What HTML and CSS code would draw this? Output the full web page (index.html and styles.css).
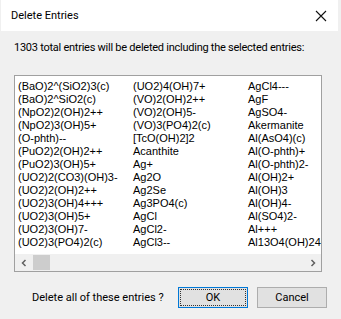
FILE: index.html
```html
<!DOCTYPE html>
<html lang="en">
<head>
    <meta charset="UTF-8">
    <title>Delete Entries</title>
    <link rel="stylesheet" href="styles.css">
</head>
<body>

    <div class="dialog">
        <div class="titlebar">
            <span class="title">Delete Entries</span>
            <svg class="close" width="12" height="12" viewBox="0 0 12 12">
                <path d="M1 1 L11 11 M11 1 L1 11" stroke="#111" stroke-width="1.1" fill="none"/>
            </svg>
        </div>

        <div class="content">
            <p class="message">1303 total entries will be deleted including the selected entries:</p>

            <div class="listbox">
                <div class="list-items">
                    <span>(BaO)2^(SiO2)3(c)</span>
                    <span>(BaO)2^SiO2(c)</span>
                    <span>(NpO2)2(OH)2++</span>
                    <span>(NpO2)3(OH)5+</span>
                    <span>(O-phth)--</span>
                    <span>(PuO2)2(OH)2++</span>
                    <span>(PuO2)3(OH)5+</span>
                    <span>(UO2)2(CO3)(OH)3-</span>
                    <span>(UO2)2(OH)2++</span>
                    <span>(UO2)3(OH)4+++</span>
                    <span>(UO2)3(OH)5+</span>
                    <span>(UO2)3(OH)7-</span>
                    <span>(UO2)3(PO4)2(c)</span>

                    <span>(UO2)4(OH)7+</span>
                    <span>(VO)2(OH)2++</span>
                    <span>(VO)2(OH)5-</span>
                    <span>(VO)3(PO4)2(c)</span>
                    <span>[TcO(OH)2]2</span>
                    <span>Acanthite</span>
                    <span>Ag+</span>
                    <span>Ag2O</span>
                    <span>Ag2Se</span>
                    <span>Ag3PO4(c)</span>
                    <span>AgCl</span>
                    <span>AgCl2-</span>
                    <span>AgCl3--</span>

                    <span>AgCl4---</span>
                    <span>AgF</span>
                    <span>AgSO4-</span>
                    <span>Akermanite</span>
                    <span>Al(AsO4)(c)</span>
                    <span>Al(O-phth)+</span>
                    <span>Al(O-phth)2-</span>
                    <span>Al(OH)2+</span>
                    <span>Al(OH)3</span>
                    <span>Al(OH)4-</span>
                    <span>Al(SO4)2-</span>
                    <span>Al+++</span>
                    <span>Al13O4(OH)24(c)</span>
                </div>

                <div class="hscroll">
                    <span class="scroll-btn">
                        <svg width="8" height="8" viewBox="0 0 8 8">
                            <path d="M5.5 1 L2.5 4 L5.5 7" stroke="#606060" stroke-width="1.5" fill="none"/>
                        </svg>
                    </span>
                    <span class="scroll-track">
                        <span class="scroll-thumb"></span>
                    </span>
                    <span class="scroll-btn">
                        <svg width="8" height="8" viewBox="0 0 8 8">
                            <path d="M2.5 1 L5.5 4 L2.5 7" stroke="#606060" stroke-width="1.5" fill="none"/>
                        </svg>
                    </span>
                </div>
            </div>

            <div class="footer">
                <span class="question">Delete all of these entries ?</span>
                <div class="buttons">
                    <button class="btn btn-default">OK</button>
                    <button class="btn">Cancel</button>
                </div>
            </div>
        </div>
    </div>

</body>
</html>
```

FILE: styles.css
```css
* {
    margin: 0;
    padding: 0;
    box-sizing: border-box;
}

body {
    background: #f0f0f0;
    font-family: Roboto, 'Liberation Sans', sans-serif;
    font-size: 11px;
    color: #000;
    width: 341px;
    height: 319px;
    overflow: hidden;
}

.dialog {
    width: 337px;
    height: 319px;
    margin-left: 1px;
    background: #f0f0f0;
}

.titlebar {
    height: 31px;
    background: #fff;
    display: flex;
    align-items: center;
    justify-content: space-between;
    padding: 0 11px 0 10px;
}

.title {
    line-height: 16px;
}

.close {
    display: block;
}

.content {
    padding: 9px 0 0 13px;
}

.message {
    line-height: 16px;
    white-space: nowrap;
    letter-spacing: -0.25px;
}

.listbox {
    margin-top: 19px;
    width: 308px;
    height: 197px;
    border: 1px solid #a0a0a0;
    background: #fff;
    display: flex;
    flex-direction: column;
    overflow: hidden;
}

.list-items {
    flex: 1;
    min-height: 0;
    display: grid;
    grid-auto-flow: column;
    grid-template-rows: repeat(13, 13px);
    grid-auto-columns: 115px;
    padding: 4px 0 0 3px;
    font-family: 'Liberation Sans', sans-serif;
    font-size: 11px;
    line-height: 13px;
    white-space: nowrap;
    overflow: hidden;
}

.hscroll {
    height: 17px;
    flex-shrink: 0;
    background: #f0f0f0;
    display: flex;
}

.scroll-btn {
    width: 17px;
    display: flex;
    align-items: center;
    justify-content: center;
}

.scroll-track {
    flex: 1;
    display: flex;
    align-items: center;
    padding-left: 1px;
}

.scroll-thumb {
    width: 17px;
    height: 15px;
    background: #cdcdcd;
}

.footer {
    margin-top: 15px;
    display: flex;
    align-items: center;
    justify-content: space-between;
    padding: 0 11px 0 18px;
}

.question {
    line-height: 16px;
    white-space: nowrap;
}

.buttons {
    display: flex;
    gap: 9px;
}

.btn {
    width: 70px;
    height: 21px;
    background: #e1e1e1;
    border: 1px solid #adadad;
    font-family: Roboto, 'Liberation Sans', sans-serif;
    font-size: 11px;
    color: #000;
}

.btn-default {
    border: 1px solid #0078d7;
    outline: 1px dotted #333;
    outline-offset: -3px;
}
```
